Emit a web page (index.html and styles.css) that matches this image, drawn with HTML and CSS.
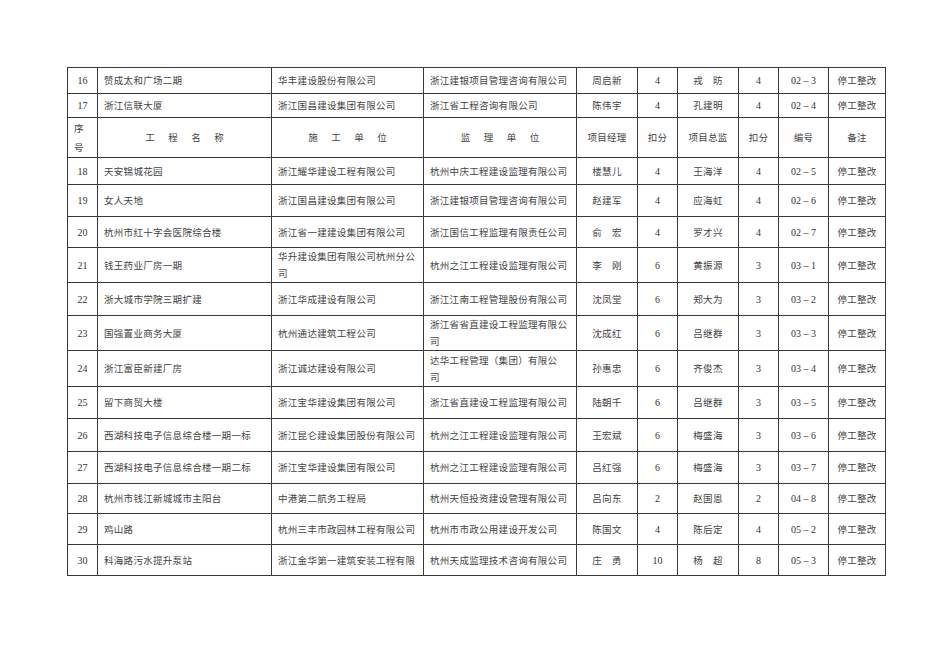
FILE: index.html
```html
<!DOCTYPE html>
<html lang="zh-CN">
<head>
<meta charset="utf-8">
<title>停工整改项目表</title>
<link rel="stylesheet" href="styles.css">
</head>
<body>
<div class="page">
<table class="grid">
<colgroup>
<col class="c-no"><col class="c-name"><col class="c-build"><col class="c-sup"><col class="c-pm"><col class="c-sc"><col class="c-dir"><col class="c-sc"><col class="c-code"><col class="c-note">
</colgroup>
<tbody>
<tr class="h26"><td class="num">16</td><td class="l">赞成太和广场二期</td><td class="l">华丰建设股份有限公司</td><td class="l">浙江建银项目管理咨询有限公司</td><td>周启新</td><td class="num">4</td><td>戎　昉</td><td class="num">4</td><td class="num">02 – 3</td><td>停工整改</td></tr>
<tr class="h24"><td class="num">17</td><td class="l">浙江信联大厦</td><td class="l">浙江国昌建设集团有限公司</td><td class="l">浙江省工程咨询有限公司</td><td>陈伟宇</td><td class="num">4</td><td>孔建明</td><td class="num">4</td><td class="num">02 – 4</td><td>停工整改</td></tr>
<tr class="h40 head"><td class="seq">序<br>号</td><td><span class="wide">工程名称</span></td><td><span class="wide">施工单位</span></td><td><span class="wide">监理单位</span></td><td>项目经理</td><td>扣分</td><td>项目总监</td><td>扣分</td><td>编号</td><td>备注</td></tr>
<tr class="h27"><td class="num">18</td><td class="l">天安锦城花园</td><td class="l">浙江耀华建设工程有限公司</td><td class="l">杭州中庆工程建设监理有限公司</td><td>楼慧儿</td><td class="num">4</td><td>王海洋</td><td class="num">4</td><td class="num">02 – 5</td><td>停工整改</td></tr>
<tr class="h32"><td class="num">19</td><td class="l">女人天地</td><td class="l">浙江国昌建设集团有限公司</td><td class="l">浙江建银项目管理咨询有限公司</td><td>赵建军</td><td class="num">4</td><td>应海虹</td><td class="num">4</td><td class="num">02 – 6</td><td>停工整改</td></tr>
<tr class="h31"><td class="num">20</td><td class="l">杭州市红十字会医院综合楼</td><td class="l">浙江省一建建设集团有限公司</td><td class="l">浙江国信工程监理有限责任公司</td><td>俞　宏</td><td class="num">4</td><td>罗才兴</td><td class="num">4</td><td class="num">02 – 7</td><td>停工整改</td></tr>
<tr class="h35"><td class="num">21</td><td class="l">钱王药业厂房一期</td><td class="l">华升建设集团有限公司杭州分公<br>司</td><td class="l">杭州之江工程建设监理有限公司</td><td>李　刚</td><td class="num">6</td><td>黄振源</td><td class="num">3</td><td class="num">03 – 1</td><td>停工整改</td></tr>
<tr class="h33"><td class="num">22</td><td class="l">浙大城市学院三期扩建</td><td class="l">浙江华成建设有限公司</td><td class="l">浙江江南工程管理股份有限公司</td><td>沈凤堂</td><td class="num">6</td><td>郑大为</td><td class="num">3</td><td class="num">03 – 2</td><td>停工整改</td></tr>
<tr class="h34"><td class="num">23</td><td class="l">国强置业商务大厦</td><td class="l">杭州通达建筑工程公司</td><td class="l">浙江省省直建设工程监理有限公<br>司</td><td>沈成红</td><td class="num">6</td><td>吕继群</td><td class="num">3</td><td class="num">03 – 3</td><td>停工整改</td></tr>
<tr class="h36"><td class="num">24</td><td class="l">浙江富臣新建厂房</td><td class="l">浙江诚达建设有限公司</td><td class="l">达华工程管理（集团）有限公<br>司</td><td>孙惠忠</td><td class="num">6</td><td>齐俊杰</td><td class="num">3</td><td class="num">03 – 4</td><td>停工整改</td></tr>
<tr class="h32"><td class="num">25</td><td class="l">留下商贸大楼</td><td class="l">浙江宝华建设集团有限公司</td><td class="l">浙江省直建设工程监理有限公司</td><td>陆朝千</td><td class="num">6</td><td>吕继群</td><td class="num">3</td><td class="num">03 – 5</td><td>停工整改</td></tr>
<tr class="h33"><td class="num">26</td><td class="l">西湖科技电子信息综合楼一期一标</td><td class="l">浙江昆仑建设集团股份有限公司</td><td class="l">杭州之江工程建设监理有限公司</td><td>王宏斌</td><td class="num">6</td><td>梅盛海</td><td class="num">3</td><td class="num">03 – 6</td><td>停工整改</td></tr>
<tr class="h32"><td class="num">27</td><td class="l">西湖科技电子信息综合楼一期二标</td><td class="l">浙江宝华建设集团有限公司</td><td class="l">杭州之江工程建设监理有限公司</td><td>吕红强</td><td class="num">6</td><td>梅盛海</td><td class="num">3</td><td class="num">03 – 7</td><td>停工整改</td></tr>
<tr class="h30"><td class="num">28</td><td class="l">杭州市钱江新城城市主阳台</td><td class="l">中港第二航务工程局</td><td class="l">杭州天恒投资建设管理有限公司</td><td>吕向东</td><td class="num">2</td><td>赵国恩</td><td class="num">2</td><td class="num">04 – 8</td><td>停工整改</td></tr>
<tr class="h31"><td class="num">29</td><td class="l">鸡山路</td><td class="l">杭州三丰市政园林工程有限公司</td><td class="l">杭州市市政公用建设开发公司</td><td>陈国文</td><td class="num">4</td><td>陈后定</td><td class="num">4</td><td class="num">05 – 2</td><td>停工整改</td></tr>
<tr class="h31"><td class="num">30</td><td class="l">科海路污水提升泵站</td><td class="l">浙江金华第一建筑安装工程有限</td><td class="l">杭州天成监理技术咨询有限公司</td><td>庄　勇</td><td class="num">10</td><td>杨　超</td><td class="num">8</td><td class="num">05 – 3</td><td>停工整改</td></tr>
</tbody>
</table>
</div>
</body>
</html>
```
FILE: styles.css
```css
html, body {
  margin: 0;
  padding: 0;
  background: #ffffff;
}
.page {
  width: 950px;
  height: 672px;
  box-sizing: border-box;
  padding: 67px 0 0 67px;
  font-family: "Noto Sans CJK SC", "Liberation Serif", sans-serif;
  color: #444;
}
.grid {
  border-collapse: collapse;
  table-layout: fixed;
  width: 818px;
  font-size: 9.5px;
  letter-spacing: 0.3px;
}
.c-no { width: 30px; }
.c-name { width: 174px; }
.c-build { width: 152px; }
.c-sup { width: 153px; }
.c-pm { width: 61px; }
.c-sc { width: 40px; }
.c-dir { width: 61px; }
.c-code { width: 50px; }
.c-note { width: 57px; }
.grid td {
  border: 1px solid #3a3a3a;
  padding: 0;
  text-align: center;
  vertical-align: middle;
  white-space: nowrap;
  overflow: hidden;
  line-height: 17px;
}
.grid td.l {
  text-align: left;
  padding-left: 6px;
}
.grid td.num {
  font-family: "Liberation Serif", serif;
  font-size: 10px;
  letter-spacing: 0;
  color: #333;
}
.grid td.seq {
  text-align: left;
  padding-left: 6px;
  line-height: 19px;
}
.wide {
  letter-spacing: 13.5px;
  padding-left: 13.5px;
}
.h24 { height: 24px; }
.h26 { height: 26px; }
.h27 { height: 27px; }
.h30 { height: 30px; }
.h31 { height: 31px; }
.h32 { height: 32px; }
.h33 { height: 33px; }
.h34 { height: 34px; }
.h35 { height: 35px; }
.h36 { height: 36px; }
.h40 { height: 40px; }
```
